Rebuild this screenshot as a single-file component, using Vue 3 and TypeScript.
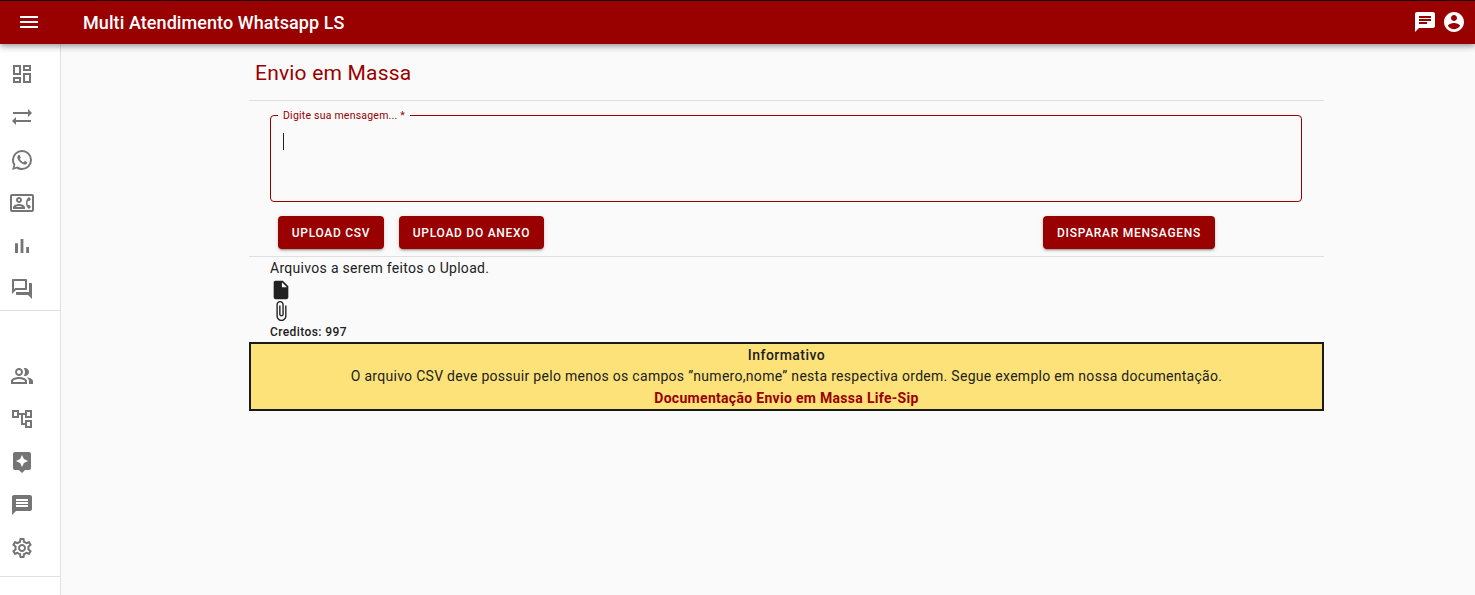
<script setup lang="ts">
const menuPath = 'M3 18h18v-2H3v2zm0-5h18v-2H3v2zm0-7v2h18V6H3z'
const chatPath =
  'M20 2H4c-1.1 0-1.99.9-1.99 2L2 22l4-4h14c1.1 0 2-.9 2-2V4c0-1.1-.9-2-2-2zM6 9h12v2H6V9zm8 5H6v-2h8v2zm4-6H6V6h12v2z'
const accountPath =
  'M12 2C6.48 2 2 6.48 2 12s4.48 10 10 10 10-4.48 10-10S17.52 2 12 2zm0 3c1.66 0 3 1.34 3 3s-1.34 3-3 3-3-1.34-3-3 1.34-3 3-3zm0 14.2c-2.5 0-4.71-1.28-6-3.22.03-1.99 4-3.08 6-3.08 1.99 0 5.97 1.09 6 3.08-1.29 1.94-3.5 3.22-6 3.22z'
const filePath = 'M6 2c-1.1 0-1.99.9-1.99 2L4 20c0 1.1.89 2 1.99 2H18c1.1 0 2-.9 2-2V8l-6-6H6zm7 7V3.5L18.5 9H13z'
const clipPath =
  'M16.5 6v11.5c0 2.21-1.79 4-4 4s-4-1.79-4-4V5c0-1.38 1.12-2.5 2.5-2.5s2.5 1.12 2.5 2.5v10.5c0 .55-.45 1-1 1s-1-.45-1-1V6H10v9.5c0 1.38 1.12 2.5 2.5 2.5s2.5-1.12 2.5-2.5V5c0-2.21-1.79-4-4-4S7 2.79 7 5v12.5c0 3.04 2.46 5.5 5.5 5.5s5.5-2.46 5.5-5.5V6h-1.5z'

const mainMenu: string[] = [
  'M19 5v2h-4V5h4M9 5v6H5V5h4m10 8v6h-4v-6h4M9 17v2H5v-2h4M21 3h-8v6h8V3zM11 3H3v10h8V3zm10 8h-8v10h8V11zm-10 4H3v6h8v-6z',
  'M22 8l-4-4v3H3v2h15v3l4-4zM2 16l4 4v-3h15v-2H6v-3l-4 4z',
  'M16.75 13.96c.25.13.41.2.46.3.06.11.04.61-.21 1.18-.2.56-1.24 1.1-1.7 1.12-.46.02-.47.36-2.96-.73-2.49-1.09-3.99-3.75-4.11-3.92-.12-.17-.96-1.38-.92-2.61.05-1.22.69-1.8.95-2.04.24-.26.51-.29.68-.26h.47c.15 0 .36-.06.55.45l.69 1.87c.06.13.1.28.01.44l-.27.41-.39.42c-.12.12-.26.25-.12.5.12.26.62 1.09 1.32 1.78.91.88 1.71 1.17 1.95 1.3.24.14.39.12.54-.04l.81-.94c.19-.25.35-.19.58-.11l1.67.88M12 2a10 10 0 0 1 10 10 10 10 0 0 1-10 10c-1.97 0-3.8-.57-5.35-1.55L2 22l1.55-4.65A9.969 9.969 0 0 1 2 12 10 10 0 0 1 12 2m0 2a8 8 0 0 0-8 8c0 1.72.54 3.31 1.46 4.61L4.5 19.5l2.89-.96A7.95 7.95 0 0 0 12 20a8 8 0 0 0 8-8 8 8 0 0 0-8-8z',
  'M22 3H2C.9 3 0 3.9 0 5v14c0 1.1.9 2 2 2h20c1.1 0 1.99-.9 1.99-2L24 5c0-1.1-.9-2-2-2zm0 16H2V5h20v14zm-2.99-1.01L21 16l-1.51-2h-1.64c-.22-.63-.35-1.3-.35-2s.13-1.37.35-2h1.64L21 8l-1.99-1.99c-1.31.98-2.28 2.37-2.73 3.99-.18.64-.28 1.31-.28 2s.1 1.36.28 2c.45 1.61 1.42 3.01 2.73 3.99zM9 12c1.65 0 3-1.35 3-3s-1.35-3-3-3-3 1.35-3 3 1.35 3 3 3zm0-4c.55 0 1 .45 1 1s-.45 1-1 1-1-.45-1-1 .45-1 1-1zm6 8.59c0-2.5-3.97-3.58-6-3.58s-6 1.08-6 3.58V18h12v-1.41zM5.48 16c.74-.5 2.22-1 3.52-1s2.77.49 3.52 1H5.48z',
  'M5 9.2h3V19H5zM10.6 5h2.8v14h-2.8zm5.6 8H19v6h-2.8z',
  'M15 4v7H5.17L4 12.17V4h11m1-2H3c-.55 0-1 .45-1 1v14l4-4h10c.55 0 1-.45 1-1V3c0-.55-.45-1-1-1zm5 4h-2v9H6v2c0 .55.45 1 1 1h11l4 4V7c0-.55-.45-1-1-1z',
]

const adminMenu: string[] = [
  'M16.67 13.13C18.04 14.06 19 15.32 19 17v3h4v-3c0-2.18-3.57-3.47-6.33-3.87zM15 12c2.21 0 4-1.79 4-4s-1.79-4-4-4c-.47 0-.91.1-1.33.24C14.5 5.27 15 6.58 15 8s-.5 2.73-1.33 3.76c.42.14.86.24 1.33.24zM9 12c2.21 0 4-1.79 4-4s-1.79-4-4-4-4 1.79-4 4 1.79 4 4 4zm0-6c1.1 0 2 .9 2 2s-.9 2-2 2-2-.9-2-2 .9-2 2-2zM9 13c-2.67 0-8 1.34-8 4v3h16v-3c0-2.66-5.33-4-8-4zm6 5H3v-.99C3.2 16.29 6.3 15 9 15s5.8 1.29 6 2v1z',
  'M22 11V3h-7v3H9V3H2v8h7V8h2v10h4v3h7v-8h-7v3h-2V8h2v3h7zM7 9H4V5h3v4zm10 6h3v4h-3v-4zm0-10h3v4h-3V5z',
  'M19 2H5c-1.1 0-2 .9-2 2v14c0 1.1.9 2 2 2h4l3 3 3-3h4c1.1 0 2-.9 2-2V4c0-1.1-.9-2-2-2zm-5.12 10.88L12 17l-1.88-4.12L6 11l4.12-1.88L12 5l1.88 4.12L18 11l-4.12 1.88z',
  'M20 2H4c-1.1 0-1.99.9-1.99 2L2 22l4-4h14c1.1 0 2-.9 2-2V4c0-1.1-.9-2-2-2zm-2 12H6v-2h12v2zm0-3H6V9h12v2zm0-3H6V6h12v2z',
  'M19.43 12.98c.04-.32.07-.64.07-.98 0-.34-.03-.66-.07-.98l2.11-1.65c.19-.15.24-.42.12-.64l-2-3.46c-.09-.16-.26-.25-.44-.25-.06 0-.12.01-.17.03l-2.49 1c-.52-.4-1.08-.73-1.69-.98l-.38-2.65C14.46 2.18 14.25 2 14 2h-4c-.25 0-.46.18-.49.42l-.38 2.65c-.61.25-1.17.59-1.69.98l-2.49-1c-.06-.02-.12-.03-.18-.03-.17 0-.34.09-.43.25l-2 3.46c-.13.22-.07.49.12.64l2.11 1.65c-.04.32-.07.65-.07.98 0 .33.03.66.07.98l-2.11 1.65c-.19.15-.24.42-.12.64l2 3.46c.09.16.26.25.44.25.06 0 .12-.01.17-.03l2.49-1c.52.4 1.08.73 1.69.98l.38 2.65c.03.24.24.42.49.42h4c.25 0 .46-.18.49-.42l.38-2.65c.61-.25 1.17-.59 1.69-.98l2.49 1c.06.02.12.03.18.03.17 0 .34-.09.43-.25l2-3.46c.12-.22.07-.49-.12-.64l-2.11-1.65zm-1.98-1.71c.04.31.05.52.05.73 0 .21-.02.43-.05.73l-.14 1.13.89.7 1.08.84-.7 1.21-1.27-.51-1.04-.42-.9.68c-.43.32-.84.56-1.25.73l-1.06.43-.16 1.13-.2 1.35h-1.4l-.19-1.35-.16-1.13-1.06-.43c-.43-.18-.83-.41-1.23-.71l-.91-.7-1.06.43-1.27.51-.7-1.21 1.08-.84.89-.7-.14-1.13c-.03-.31-.05-.54-.05-.74s.02-.43.05-.73l.14-1.13-.89-.7-1.08-.84.7-1.21 1.27.51 1.04.42.9-.68c.43-.32.84-.56 1.25-.73l1.06-.43.16-1.13.2-1.35h1.39l.19 1.35.16 1.13 1.06.43c.43.18.83.41 1.23.71l.91.7 1.06-.43 1.27-.51.7 1.21-1.07.85-.89.7.14 1.13zM12 8c-2.21 0-4 1.79-4 4s1.79 4 4 4 4-1.79 4-4-1.79-4-4-4zm0 6c-1.1 0-2-.9-2-2s.9-2 2-2 2 .9 2 2-.9 2-2 2z',
]
</script>

<template>
  <div class="app">
    <header class="topbar">
      <svg class="icon menu-btn" viewBox="0 0 24 24"><path :d="menuPath" /></svg>
      <h1 class="brand">Multi Atendimento Whatsapp LS</h1>
      <svg class="icon chat-btn" viewBox="0 0 24 24"><path :d="chatPath" /></svg>
      <svg class="icon account-btn" viewBox="0 0 24 24"><path :d="accountPath" /></svg>
    </header>

    <div class="body">
      <nav class="sidebar">
        <ul class="nav-group">
          <li v-for="d in mainMenu" :key="d" class="nav-item">
            <svg class="icon" viewBox="0 0 24 24"><path :d="d" /></svg>
          </li>
        </ul>
        <ul class="nav-group nav-group--admin">
          <li v-for="d in adminMenu" :key="d" class="nav-item">
            <svg class="icon" viewBox="0 0 24 24"><path :d="d" /></svg>
          </li>
        </ul>
      </nav>

      <main class="content">
        <h2 class="page-title">Envio em Massa</h2>
        <hr class="divider" />

        <fieldset class="message-field">
          <legend>Digite sua mensagem... *</legend>
          <span class="caret"></span>
        </fieldset>

        <div class="actions">
          <button class="btn btn--csv" type="button">Upload CSV</button>
          <button class="btn btn--attach" type="button">Upload do Anexo</button>
          <button class="btn btn--send" type="button">Disparar Mensagens</button>
        </div>
        <hr class="divider" />

        <div class="uploads">
          <p class="uploads-title">Arquivos a serem feitos o Upload.</p>
          <svg class="icon upload-icon" viewBox="0 0 24 24"><path :d="filePath" /></svg>
          <svg class="icon upload-icon upload-icon--clip" viewBox="0 0 24 24"><path :d="clipPath" /></svg>
          <p class="credits">Creditos: 997</p>
        </div>

        <section class="notice">
          <strong class="notice-title">Informativo</strong>
          <p class="notice-text">
            O arquivo CSV deve possuir pelo menos os campos ”numero,nome” nesta respectiva ordem. Segue exemplo em nossa documentação.
          </p>
          <a class="notice-link" href="#">Documentação Envio em Massa Life-Sip</a>
        </section>
      </main>
    </div>
  </div>
</template>

<style>
html,
body {
  margin: 0;
  height: 100%;
  overflow: hidden;
  background: #fafafa;
}
</style>

<style scoped>
.app {
  width: 1475px;
  height: 595px;
  display: flex;
  flex-direction: column;
  overflow: hidden;
  font-family: Roboto, "Liberation Sans", sans-serif;
  color: #212121;
  background: #fafafa;
}

.icon {
  display: block;
  width: 24px;
  height: 24px;
  fill: currentColor;
  flex: 0 0 auto;
}

.topbar {
  position: relative;
  z-index: 2;
  box-sizing: border-box;
  height: 44px;
  flex: 0 0 auto;
  display: flex;
  align-items: center;
  padding: 0 0 1px 17px;
  border-top: 1px solid #1a0000;
  background: #990000;
  color: #fff;
  box-shadow: 0 2px 4px -1px rgba(0, 0, 0, 0.2), 0 4px 5px rgba(0, 0, 0, 0.14), 0 1px 10px rgba(0, 0, 0, 0.12);
}

.brand {
  margin: 0 0 0 42px;
  flex: 1;
  font-size: 18px;
  font-weight: 500;
  letter-spacing: 0.08px;
}

.chat-btn {
  margin-right: 5px;
}

.account-btn {
  margin-right: 9px;
}

.body {
  flex: 1;
  display: flex;
  min-height: 0;
}

.sidebar {
  box-sizing: border-box;
  width: 61px;
  flex: 0 0 auto;
  background: #fff;
  border-right: 1px solid #e0e0e0;
  color: #757575;
}

.nav-group {
  list-style: none;
  margin: 0;
  padding: 8px 0 0;
  border-bottom: 1px solid #e0e0e0;
}

.nav-group--admin {
  padding: 43px 0 7px;
}

.nav-item {
  height: 43px;
  display: flex;
  align-items: center;
  padding-left: 10px;
}

.content {
  width: 1075px;
  margin-left: 188px;
  font-size: 14px;
}

.page-title {
  box-sizing: border-box;
  height: 56px;
  margin: 0;
  padding: 17px 5px 0 6px;
  font-size: 21px;
  line-height: 24px;
  font-weight: 400;
  letter-spacing: 0.2px;
  color: #990000;
}

.divider {
  margin: 0;
  border: 0;
  border-top: 1px solid #e0e0e0;
}

.message-field {
  box-sizing: border-box;
  position: relative;
  width: 1032px;
  height: 94px;
  margin: 7px 0 0 21px;
  padding: 0;
  border: 1px solid #990000;
  border-radius: 4px;
}

.message-field legend {
  margin-left: 7px;
  padding: 1px 5px 0;
  font-size: 10.5px;
  line-height: 14px;
  letter-spacing: 0.22px;
  color: #990000;
}

.caret {
  position: absolute;
  left: 12px;
  top: 10px;
  width: 1px;
  height: 17px;
  background: #212121;
}

.actions {
  display: flex;
  align-items: center;
  height: 33px;
  margin: 14px 0 7px 29px;
}

.btn {
  box-sizing: border-box;
  height: 33px;
  padding: 0;
  border: 0;
  border-radius: 4px;
  background: #990000;
  color: #fff;
  font: 500 12px Roboto, "Liberation Sans", sans-serif;
  letter-spacing: 0.73px;
  text-transform: uppercase;
  box-shadow: 0 3px 1px -2px rgba(0, 0, 0, 0.2), 0 2px 2px rgba(0, 0, 0, 0.14), 0 1px 5px rgba(0, 0, 0, 0.12);
}

.btn--csv {
  width: 106px;
}

.btn--attach {
  width: 145px;
  margin-left: 15px;
}

.btn--send {
  width: 172px;
  margin-left: 499px;
}

.uploads {
  padding: 3px 0 0 21px;
}

.uploads-title {
  margin: 0 0 3px;
  font-size: 14px;
  line-height: 16px;
  letter-spacing: 0.3px;
}

.upload-icon {
  width: 22px;
  height: 22px;
  color: #212121;
}

.upload-icon--clip {
  margin-top: -1px;
}

.credits {
  margin: 3px 0 0;
  font-size: 12px;
  line-height: 14px;
  font-weight: 500;
  letter-spacing: 0.4px;
}

.notice {
  box-sizing: border-box;
  height: 69px;
  margin-top: 3px;
  display: flex;
  flex-direction: column;
  align-items: center;
  justify-content: center;
  border: 2px solid #1a1a1a;
  background: #fde279;
  text-align: center;
  line-height: 21px;
}

.notice-title {
  font-weight: 500;
  letter-spacing: 0.45px;
}

.notice-text {
  margin: 0;
  letter-spacing: 0.29px;
}

.notice-link {
  margin-top: 1px;
  color: #990000;
  font-weight: 700;
  letter-spacing: 0.3px;
  text-decoration: none;
}
</style>
